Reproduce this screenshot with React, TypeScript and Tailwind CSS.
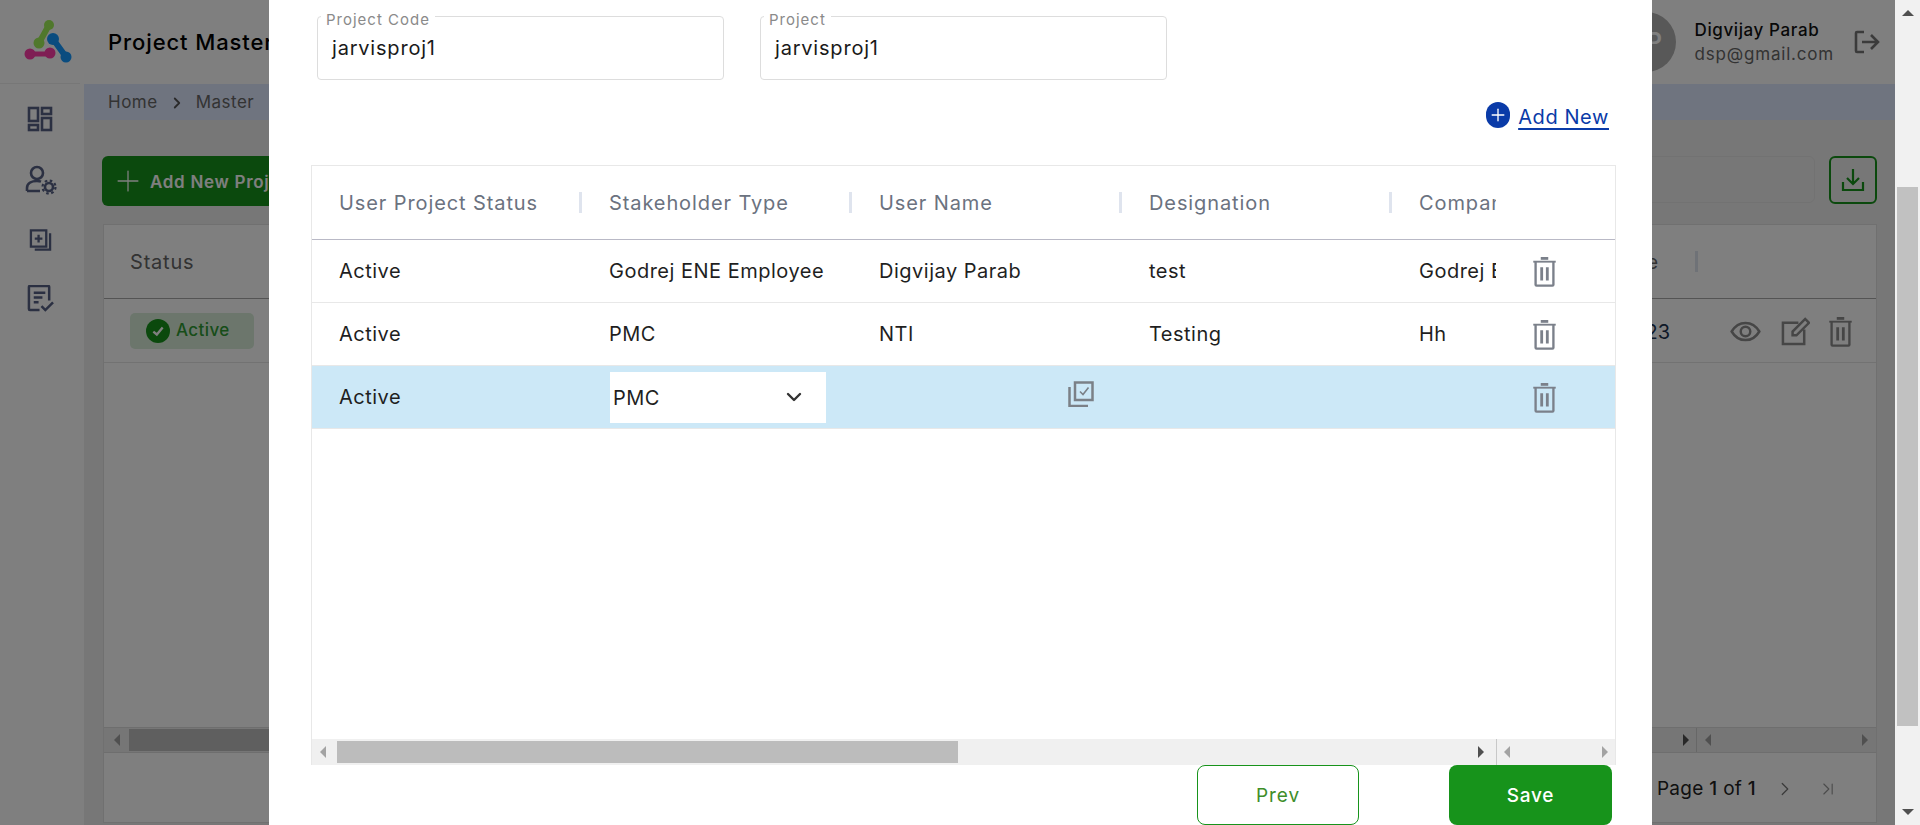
import { ChevronDown, ChevronRight, ChevronLast, Plus } from "lucide-react";

const font = "font-['Inter','Liberation_Sans',sans-serif]";

function TrashIcon({ className }: { className?: string }) {
  return (
    <svg viewBox="0 0 26 32" className={className} fill="none" stroke="currentColor">
      <path d="M9 1.500h8" strokeWidth="3" />
      <path d="M1 5h24" strokeWidth="2" />
      <path d="M3.500 5v24.500a1 1 0 0 0 1 1h17a1 1 0 0 0 1-1V5" strokeWidth="2.500" />
      <path d="M10 11v14M16 11v14" strokeWidth="3" />
    </svg>
  );
}

function Logo() {
  return (
    <svg viewBox="0 0 48 43" className="w-[48px] h-[43px]" fill="none" strokeLinecap="round">
      <path d="M25 5 15 23" stroke="#a0f058" strokeWidth="6" />
      <circle cx="25" cy="5" r="5" fill="#a0f058" />
      <circle cx="15" cy="23" r="5.500" fill="#a0f058" />
      <path d="M29 19 42 37" stroke="#1498ff" strokeWidth="6" />
      <circle cx="29" cy="19" r="6" fill="#1498ff" />
      <circle cx="42" cy="37" r="5.500" fill="#1498ff" />
      <path d="M6 34h20" stroke="#ff3ca8" strokeWidth="5" />
      <circle cx="6" cy="34" r="5.500" fill="#ff3ca8" />
      <circle cx="26" cy="33" r="5.500" fill="#ff3ca8" />
    </svg>
  );
}

function Sidebar() {
  return (
    <div className="w-[84px] shrink-0 bg-white shadow-[2px_0_4px_rgba(0,0,0,0.05)] flex flex-col text-[#566085]">
      <div className="h-[84px] w-[80px] border-b border-[#eeeeee] flex items-center justify-center pl-[15px]">
        <Logo />
      </div>
      <div className="w-[80px] flex flex-col items-center pt-[22px] gap-[33px]">
        <svg viewBox="0 0 26 26" className="w-[26px] h-[26px]" fill="none" stroke="currentColor" strokeWidth="2.600">
          <rect x="2" y="2" width="9" height="13" />
          <rect x="15" y="2" width="9" height="6" />
          <rect x="15" y="12" width="9" height="12" />
          <rect x="2" y="19" width="9" height="5" />
        </svg>
        <svg viewBox="0 0 32 30" className="w-[32px] h-[30px] ml-[2px]" fill="none" stroke="currentColor" strokeWidth="2.600">
          <circle cx="12" cy="8" r="6" />
          <path d="M2 26v-3c0-5 5-7 10-7 1.500 0 3 .2 4 .6M2 26h13" />
          <circle cx="24" cy="22" r="4" strokeWidth="2.600" />
          <circle cx="24" cy="22" r="6.500" strokeWidth="2.200" strokeDasharray="2.600 2.500" />
        </svg>
        <svg viewBox="0 0 24 24" className="w-[23px] h-[24px]" fill="none" stroke="currentColor" strokeWidth="2.400">
          <path d="M2 2h16v17H2z" />
          <path d="M22 5v17H6" />
          <path d="M10 6.500v8M6 10.500h8" />
        </svg>
        <svg viewBox="0 0 28 28" className="w-[27px] h-[27px]" fill="none" stroke="currentColor" strokeWidth="2.600">
          <path d="M13 26H3a1 1 0 0 1-1-1V2a1 1 0 0 1 1-1h19a1 1 0 0 1 1 1v14" />
          <path d="M7 8h12M7 13h9M7 18h5" />
          <path d="M15 22l4 4 8-8" />
        </svg>
      </div>
    </div>
  );
}

function HeaderBar() {
  return (
    <div className="h-[84px] bg-white flex items-center justify-between pl-[24px] pr-[15px] shrink-0">
      <span className="text-[22px] tracking-[0.9px] font-medium text-black">Project Master</span>
      <div className="flex items-center">
        <div className="w-[60px] h-[60px] rounded-full bg-[#b0b0b0] flex items-center justify-center text-[24px] font-semibold text-white">
          DP
        </div>
        <div className="ml-[19px] mr-[20px] flex flex-col">
          <span className="text-[17px] tracking-[0.6px] font-medium leading-[24px] text-[#111]">Digvijay Parab</span>
          <span className="text-[17px] tracking-[0.8px] leading-[24px] text-[#666]">dsp@gmail.com</span>
        </div>
        <svg viewBox="0 0 26 24" className="w-[26px] h-[24px] text-[#777777]" fill="none" stroke="currentColor" strokeWidth="2.600">
          <path d="M10 2H3a1 1 0 0 0-1 1v18a1 1 0 0 0 1 1h7" />
          <path d="M8 12h16M17 5l7 7-7 7" />
        </svg>
      </div>
    </div>
  );
}

function PageBehind() {
  return (
    <div className="flex-1 flex flex-col min-w-0 bg-[#eeeeee]">
      <HeaderBar />
      <div className="h-[36px] bg-[#dfe8ff] flex items-center pl-[24px] pt-[1px] text-[17px] tracking-[0.5px] text-[#666] shrink-0">
        <span>Home</span>
        <ChevronRight size={18} strokeWidth={2.400} className="mx-[10px] text-[#555]" />
        <span>Master</span>
      </div>
      <div className="flex items-start justify-between pl-[18px] pr-[18px] pt-[36px] h-[104px] shrink-0">
        <button className="w-[300px] h-[50px] rounded-[6px] bg-[#17931b] flex items-center pl-[9px] gap-[5px] text-[17px] tracking-[0.7px] font-semibold text-white">
          <Plus size={34} strokeWidth={0.9} />
          <span className="pt-[3px]">Add New Project</span>
        </button>
        <div className="flex items-start gap-[14px]">
          <div className="w-[400px] h-[47px] rounded-[6px] border border-[#e5e5e5] bg-[#efefef]" />
          <div className="w-[48px] h-[48px] rounded-[6px] border-2 border-[#17931b] flex items-center justify-center text-[#17931b]">
            <svg viewBox="0 0 24 24" className="w-[24px] h-[24px]" fill="none" stroke="currentColor" strokeWidth="2.200">
              <path d="M12 1v15M6 10l6 6 6-6" />
              <path d="M2 14v8h20v-8" />
            </svg>
          </div>
        </div>
      </div>
      <div className="ml-[19px] mr-[18px] mb-[2px] flex-1 border border-[#e0e0e0] bg-white flex flex-col">
        <div className="h-[74px] border-b border-[#a8a8a8] flex items-center justify-between pl-[26px] pr-[178px] text-[20px] tracking-[0.8px] text-[#666]">
          <span>Status</span>
          <div className="flex items-center gap-[36px]">
            <span>Date</span>
            <div className="w-[3px] h-[21px] bg-[#dfe4ee]" />
          </div>
        </div>
        <div className="h-[64px] border-b border-[#e5e5e5] flex items-center justify-between pl-[26px] pr-[23px]">
          <div className="w-[124px] h-[36px] rounded-[5px] bg-[#d8edd9] flex items-center pl-[16px] gap-[6px] text-[17px] tracking-[0.4px] font-medium text-[#2f9b33]">
            <span className="w-[24px] h-[24px] rounded-full bg-[#17931b] flex items-center justify-center">
              <svg viewBox="0 0 12 12" className="w-[14px] h-[14px]" fill="none" stroke="white" strokeWidth="2">
                <path d="M2 6.500 5 9l5-6" />
              </svg>
            </span>
            <span className="pt-[1px]">Active</span>
          </div>
          <div className="flex items-center pt-[2px]">
            <span className="mr-[60px] text-[20px] text-[#1c3350]">12/12/2023</span>
            <div className="flex items-center gap-[18px] text-[#8c8c8c]">
              <svg viewBox="0 0 32 22" className="w-[31px] h-[21px] mr-[2px]" fill="none" stroke="currentColor" strokeWidth="2.600">
                <path d="M1.500 11C5 5 10 2 16 2s11 3 14.500 9C27 17 22 20 16 20S5 17 1.500 11z" />
                <circle cx="16" cy="11" r="5" />
              </svg>
              <svg viewBox="0 0 30 30" className="w-[29px] h-[29px]" fill="none" stroke="currentColor" strokeWidth="2.600">
                <path d="M18 6H2v22h22V13" />
                <path d="M12 19v-4L25 2l4 4-13 13z" />
              </svg>
              <TrashIcon className="w-[25px] h-[30px]" />
            </div>
          </div>
        </div>
        <div className="flex-1" />
        <div className="h-[26px] bg-[#ececec] border-y border-[#dcdcdc] flex items-center">
          <div className="w-[25px] flex justify-center">
            <span className="w-0 h-0 border-y-[6px] border-y-transparent border-r-[6px] border-r-[#a0a0a0]" />
          </div>
          <div className="w-[700px] h-[22px] bg-[#bebebe]" />
          <div className="flex-1 flex justify-end pr-[7px]">
            <span className="w-0 h-0 border-y-[6px] border-y-transparent border-l-[6px] border-l-[#505050]" />
          </div>
          <div className="w-[180px] h-full border-l border-[#cfcfcf] flex items-center justify-between px-[8px]">
            <span className="w-0 h-0 border-y-[6px] border-y-transparent border-r-[6px] border-r-[#a0a0a0]" />
            <span className="w-0 h-0 border-y-[6px] border-y-transparent border-l-[6px] border-l-[#a0a0a0]" />
          </div>
        </div>
        <div className="h-[69px] flex items-center justify-end pr-[38px] pt-[3px] text-[19px] tracking-[0.3px] text-[#222]">
          <span>
            Page <b className="font-medium">1</b> of <b className="font-medium">1</b>
          </span>
          <ChevronRight size={22} strokeWidth={1.400} className="ml-[18px] text-[#777]" />
          <ChevronLast size={20} strokeWidth={1.400} className="ml-[22px] text-[#999]" />
        </div>
      </div>
    </div>
  );
}

function Field({ label, value }: { label: string; value: string }) {
  return (
    <div className="relative w-[407px] h-[64px] rounded-[4px] border border-[#dddddd] pl-[14px] pt-[18px] text-[20px] tracking-[0.8px] leading-[26px] text-[#1a1a1a]">
      <span className="absolute left-[3px] top-[-5px] bg-white px-[5px] text-[15px] tracking-[1px] leading-[16px] text-[#8a8a8a]">{label}</span>
      {value}
    </div>
  );
}

const columns = ["User Project Status", "Stakeholder Type", "User Name", "Designation", "Company"];

const rows = [
  ["Active", "Godrej ENE Employee", "Digvijay Parab", "test", "Godrej ENE"],
  ["Active", "PMC", "NTI", "Testing", "Hh"],
];

function ScrollTriangle({ dir, dark }: { dir: "left" | "right"; dark?: boolean }) {
  if (dir === "left") {
    return <span className="w-0 h-0 border-y-[6px] border-y-transparent border-r-[6px] border-r-[#a3a3a3]" />;
  }
  return (
    <span
      className={
        dark
          ? "w-0 h-0 border-y-[6px] border-y-transparent border-l-[6px] border-l-[#505050]"
          : "w-0 h-0 border-y-[6px] border-y-transparent border-l-[6px] border-l-[#a3a3a3]"
      }
    />
  );
}

function DataGrid() {
  return (
    <div className="w-[1305px] h-[600px] border border-[#e8e8e8] border-b-0 flex text-[20px] tracking-[0.5px] shrink-0 ml-[42px]">
      <div className="w-[1184px] shrink-0 flex flex-col">
        <div className="flex-1 overflow-hidden">
          <div className="h-[74px] w-[1350px] flex border-b border-[#b9b9c6]">
            {columns.map((c) => (
              <div key={c} className="w-[270px] shrink-0 flex items-center justify-between pl-[27px] text-[#6b7280] tracking-[0.9px] whitespace-nowrap overflow-hidden">
                <span>{c}</span>
                <span className="w-[3px] h-[21px] bg-[#dfe4ee]" />
              </div>
            ))}
          </div>
          {rows.map((r) => (
            <div key={r[1]} className="h-[63px] w-[1350px] flex border-b border-[#e8e8e8] text-[#1f1f1f]">
              {r.map((v, i) => (
                <div key={i} className="w-[270px] shrink-0 flex items-center pl-[27px] whitespace-nowrap">
                  {v}
                </div>
              ))}
            </div>
          ))}
          <div className="h-[63px] w-[1350px] flex items-center bg-[#cce8f7] border-b border-[#e8e8e8] text-[#1f1f1f]">
            <div className="w-[270px] shrink-0 pl-[27px]">Active</div>
            <div className="w-[270px] shrink-0 pl-[28px]">
              <div className="w-[216px] h-[51px] bg-white flex items-center justify-between pl-[3px] pr-[20px]">
                <span className="pt-[1px]">PMC</span>
                <ChevronDown size={24} strokeWidth={2.400} className="text-[#333]" />
              </div>
            </div>
            <div className="w-[270px] shrink-0 flex justify-end pr-[28px] pb-[6px]">
              <svg viewBox="0 0 26 26" className="w-[26px] h-[26px] text-[#7b8087]" fill="none" stroke="currentColor" strokeWidth="2.500">
                <path d="M7 1.500h17.500V19H7z" />
                <path d="M1.500 6v19H20" />
                <path d="M12 10.500l3 3 5.500-7" strokeWidth="1.600" />
              </svg>
            </div>
          </div>
        </div>
        <div className="h-[26px] bg-[#f0f0f0] flex items-center pl-[8px] pr-[12px]">
          <ScrollTriangle dir="left" />
          <div className="ml-[11px] w-[621px] h-[22px] bg-[#bcbcbc]" />
          <div className="flex-1" />
          <ScrollTriangle dir="right" dark />
        </div>
      </div>
      <div className="flex-1 flex flex-col">
        <div className="flex-1">
          <div className="h-[74px] border-b border-[#b9b9c6]" />
          <div className="h-[63px] border-b border-[#e8e8e8] flex items-center pl-[36px] pt-[2px]">
            <TrashIcon className="w-[25px] h-[30px] text-[#7b808a]" />
          </div>
          <div className="h-[63px] border-b border-[#e8e8e8] flex items-center pl-[36px] pt-[2px]">
            <TrashIcon className="w-[25px] h-[30px] text-[#7b808a]" />
          </div>
          <div className="h-[63px] bg-[#cce8f7] border-b border-[#e8e8e8] flex items-center pl-[36px] pt-[2px]">
            <TrashIcon className="w-[25px] h-[30px] text-[#7b808a]" />
          </div>
        </div>
        <div className="h-[26px] bg-[#f0f0f0] border-l border-[#c8c8c8] flex items-center justify-between pl-[7px] pr-[7px]">
          <ScrollTriangle dir="left" />
          <ScrollTriangle dir="right" />
        </div>
      </div>
    </div>
  );
}

function Modal() {
  return (
    <div className="absolute left-[269px] top-0 bottom-0 w-[1383px] bg-white flex flex-col overflow-hidden">
      <div className="flex gap-[36px] pl-[48px] pt-[16px]">
        <Field label="Project Code" value="jarvisproj1" />
        <Field label="Project" value="jarvisproj1" />
      </div>
      <div className="flex items-center justify-end gap-[8px] pr-[43px] mt-[22px] h-[26px]">
        <span className="w-[24px] h-[26px] rounded-full bg-[#0a3ba8] flex items-center justify-center text-white">
          <Plus size={20} strokeWidth={1.600} />
        </span>
        <a href="#" className="mt-[4px] text-[20px] tracking-[0.6px] text-[#0a3ba8] underline underline-offset-4">
          Add New
        </a>
      </div>
      <div className="mt-[37px]">
        <DataGrid />
      </div>
      <div className="flex justify-end gap-[90px] pr-[40px]">
        <button className="w-[162px] h-[60px] rounded-[8px] border border-[#17931b] bg-white pt-[3px] text-[19px] tracking-[0.9px] text-[#3e8e2a]">Prev</button>
        <button className="w-[163px] h-[60px] rounded-[8px] bg-[#17931b] pt-[3px] text-[19px] tracking-[0.7px] font-medium text-white">Save</button>
      </div>
    </div>
  );
}

function PageScrollbar() {
  return (
    <div className="w-[25px] shrink-0 bg-[#f1f1f1] flex flex-col items-center">
      <span className="mt-[10px] w-0 h-0 border-x-[6px] border-x-transparent border-b-[6px] border-b-[#505050]" />
      <div className="mt-[171px] w-[21px] h-[539px] bg-[#c1c1c1]" />
      <span className="mt-[83px] w-0 h-0 border-x-[6px] border-x-transparent border-t-[6px] border-t-[#505050]" />
    </div>
  );
}

export default function App() {
  return (
    <div className={`flex w-[1920px] h-[825px] overflow-hidden ${font}`}>
      <div className="relative flex flex-1 min-w-0">
        <Sidebar />
        <PageBehind />
        <div className="absolute inset-0 bg-black/50" />
        <Modal />
      </div>
      <PageScrollbar />
    </div>
  );
}
